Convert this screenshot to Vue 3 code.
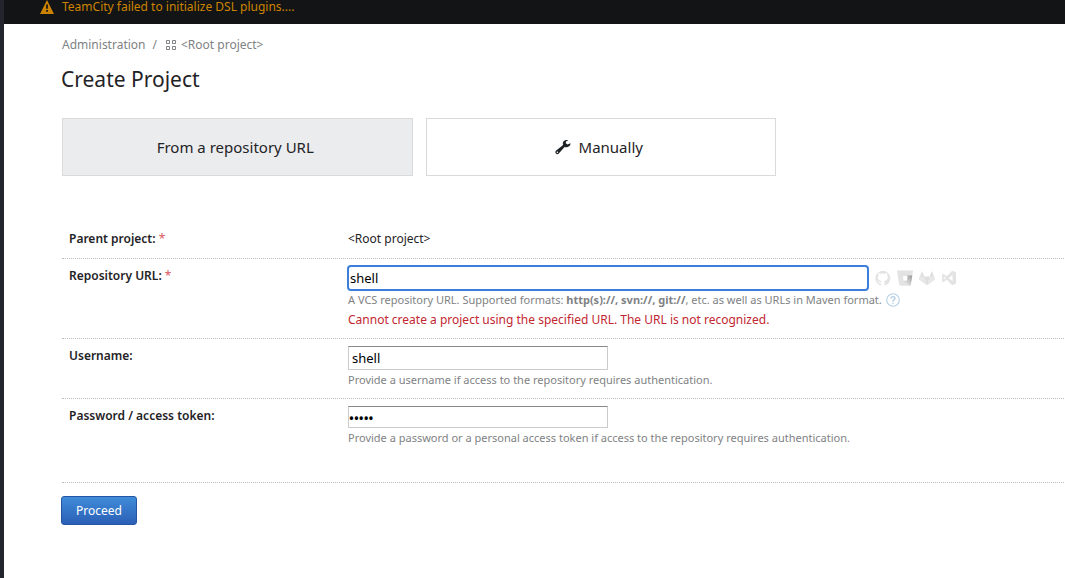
<script setup>
import { ref } from 'vue'

const repositoryUrl = ref('shell')
const username = ref('shell')
const password = ref('shell')
</script>

<template>
  <div class="page">
    <header class="notice">
      <svg class="warn" viewBox="0 0 16 16" aria-hidden="true">
        <path fill="#cc8400" fill-rule="evenodd" d="M8 0 16 16H0ZM7 5v5h2V5ZM7 11.500v2h2v-2Z" />
      </svg>
      <span>TeamCity failed to initialize DSL plugins....</span>
    </header>

    <main class="content">
      <nav class="crumbs">
        <a href="#">Administration</a>
        <span class="slash">/</span>
        <a href="#" class="root">
          <svg class="grid" viewBox="0 0 11 11" fill="none" stroke="currentColor" aria-hidden="true">
            <path d="M.5.5h3v3h-3zM6.5.5h3v3h-3zM.5 6.5h3v3h-3zM6.5 6.5h3v3h-3z" />
          </svg>&lt;Root project&gt;</a>
      </nav>

      <h1>Create Project</h1>

      <div class="modes">
        <button type="button" class="mode active">From a repository URL</button>
        <button type="button" class="mode">
          <svg class="wrench" viewBox="0 0 16 16" aria-hidden="true">
            <path fill="#1f2326" fill-rule="evenodd" d="M15.400 4.200 12.600 5.500 10.800 4.200 11 2.400 13.300 1.200C11.500.6 9.300 1.100 8.400 2.600 7.700 3.700 7.700 4.900 8.100 6L1.200 11.500C.2 12.300.1 13.600.9 14.500c.8.900 2.100.9 2.900 0L9.600 8c1.300.5 3.300.3 4.500-.7 1-.8 1.500-2 1.300-3.100ZM2.400 12.400a.8.8 0 1 1 0 1.600.8.8 0 0 1 0-1.600Z" />
          </svg>
          Manually
        </button>
      </div>

      <form @submit.prevent>
        <div class="row">
          <div class="label">Parent project: <span class="star">*</span></div>
          <div class="field">&lt;Root project&gt;</div>
        </div>

        <div class="row url-row">
          <label class="label" for="url">Repository URL: <span class="star">*</span></label>
          <div class="field">
            <div class="url-line">
              <input id="url" v-model="repositoryUrl" type="text" class="url">
              <svg class="vcs" viewBox="0 0 16 16" aria-hidden="true">
                <path fill="#e3e3e3" d="M8 .8a7.500 7.500 0 0 0-2.500 14.600c.5.1.6-.2.6-.5v-1.500c-2.100.4-2.600-.8-2.800-1.300-.1-.3-.5-.9-.9-1.100-.3-.2-.700-.6 0-.6s1.100.6 1.300.9c.7 1.200 1.900.9 2.400.7.1-.5.3-.9.5-1.100-1.900-.2-3.800-.9-3.800-3.900 0-.8.3-1.500.8-2-.1-.2-.4-1 .1-2 0 0 .7-.2 2.100.8a7 7 0 0 1 4 0c1.400-1 2.100-.8 2.100-.8.5 1 .2 1.800.1 2 .5.5.8 1.200.8 2 0 3-1.900 3.700-3.700 3.900.3.300.5.800.5 1.500v2.500c0 .3.1.6.6.5A7.500 7.500 0 0 0 8 .8Z" />
              </svg>
              <svg class="vcs" viewBox="0 0 16 16" aria-hidden="true">
                <defs>
                  <linearGradient id="bucket" x1="1" y1="0" x2="0" y2="1">
                    <stop offset="0" stop-color="#999" />
                    <stop offset="0.7" stop-color="#e3e3e3" />
                  </linearGradient>
                </defs>
                <path fill="#e3e3e3" d="M0 .5h16l-2.300 15H2.300Z" />
                <path fill="url(#bucket)" d="M10 5.500h5.300l-1.600 10H4L7 11h3Z" />
                <path fill="#fff" d="M6 6h4.500l-.5 4.500H6.500Z" />
              </svg>
              <svg class="vcs" viewBox="0 0 16 16" aria-hidden="true">
                <path fill="#dedede" d="M3 1 5.300 6.500h5.400L13 1l3 8.200L8 15.200 0 9.200Z" />
                <path fill="#e8e8e8" d="M.9 6.500h4.400L8 15.200 0 9.200ZM15.100 6.500h-4.400L8 15.200l8-6Z" />
              </svg>
              <svg class="vcs" viewBox="0 0 16 16" aria-hidden="true">
                <path fill="#e3e3e3" fill-rule="evenodd" d="M11.200.8 15 2.300v11.400l-3.800 1.500-5.500-5.400L2.700 12 1 11.200V4.800L2.700 4l3 2.300ZM11.500 5 7.700 8l3.800 3ZM2.700 6.200v3.600L4.500 8Z" />
              </svg>
            </div>
            <div class="hint">
              <span>A VCS repository URL. Supported formats: <b>http(s)://, svn://, git://</b>, etc. as well as URLs in Maven format.</span>
              <a href="#" class="help" aria-label="Help">
                <svg viewBox="0 0 14 14" fill="none" stroke="#b4cfe5" aria-hidden="true">
                  <circle cx="7" cy="7" r="6.300" stroke-width="1.100" />
                  <path stroke-width="1.400" d="M5 5.500c0-2.400 4-2.400 4-.2C9 6.800 7 6.500 7 8.500M7 9.500v1.300" />
                </svg>
              </a>
            </div>
            <div class="error">Cannot create a project using the specified URL. The URL is not recognized.</div>
          </div>
        </div>

        <div class="row input-row">
          <label class="label" for="username">Username:</label>
          <div class="field">
            <input id="username" v-model="username" type="text" class="text">
            <div class="hint">Provide a username if access to the repository requires authentication.</div>
          </div>
        </div>

        <div class="row input-row last">
          <label class="label" for="password">Password / access token:</label>
          <div class="field">
            <input id="password" v-model="password" type="password" class="text secret">
            <div class="hint">Provide a password or a personal access token if access to the repository requires authentication.</div>
          </div>
        </div>

        <button type="submit" class="proceed">Proceed</button>
      </form>
    </main>
  </div>
</template>

<style>
body {
  background: #fff;
}
</style>

<style scoped>
.page {
  min-height: 100vh;
  box-sizing: border-box;
  border-left: 4px solid #23242e;
  font: 12px/20px "Noto Sans", sans-serif;
  color: #1f2326;
}
.page * {
  box-sizing: border-box;
}
a {
  color: inherit;
  text-decoration: none;
}
button,
input {
  font: inherit;
  color: inherit;
}
.notice {
  display: flex;
  align-items: flex-start;
  gap: 7px;
  height: 24px;
  padding-left: 35px;
  background: #131416;
  color: #cc8400;
  line-height: 14px;
}
.warn {
  width: 16px;
  height: 14px;
}
.content {
  padding: 11px 1px 0 57px;
}
.crumbs {
  display: flex;
  padding-left: 1px;
  color: #808284;
  font-size: 12px;
}
.slash {
  margin: 0 9px 0 7px;
}
.root {
  display: flex;
  align-items: center;
  gap: 4px;
}
.grid {
  width: 11px;
  height: 11px;
}
h1 {
  margin: 10px 0 24px;
  font-size: 21px;
  line-height: 29px;
  font-weight: 400;
}
.modes {
  display: grid;
  grid-template-columns: 1fr 1fr;
  gap: 13px;
  max-width: 714px;
  margin-left: 1px;
}
.mode {
  display: flex;
  align-items: center;
  justify-content: center;
  gap: 8px;
  height: 58px;
  padding: 0 8px 0 4px;
  border: 1px solid #d9dadb;
  background: #fff;
  font-size: 15px;
}
.mode.active {
  background: #ebecee;
}
.wrench {
  width: 16px;
  height: 16px;
}
form {
  margin-top: 45px;
}
.row {
  display: grid;
  grid-template-columns: 279px 1fr;
  margin-left: 1px;
  padding: 8px 0 9px 7px;
  border-bottom: 1px dotted #bbb;
}
.label {
  font-weight: 600;
}
.star {
  font-weight: 400;
  color: #db5860;
}
.url-row {
  padding: 6px 0 7px 7px;
}
.url-row .label {
  padding-top: 1px;
}
.url-line {
  display: flex;
  align-items: center;
  gap: 6px;
}
.url {
  flex: 0 1 522px;
  min-width: 0;
  height: 26px;
  margin-left: -1px;
  padding: 0 1px;
  border: 2px solid #3b7fdb;
  border-radius: 4px;
  outline: none;
  background: #fff;
  color: #000;
  font-size: 13px;
}
.vcs {
  flex: none;
  width: 16px;
  height: 16px;
}
.hint {
  display: flex;
  align-items: center;
  gap: 4px;
  font-size: 11px;
  line-height: 18px;
  color: #808284;
}
.help {
  display: flex;
}
.help svg {
  width: 14px;
  height: 14px;
}
.error {
  line-height: 22px;
  color: #c22731;
}
.input-row {
  padding: 7px 0 8px 7px;
}
.input-row .hint {
  line-height: 20px;
}
.text {
  display: block;
  width: 260px;
  max-width: 100%;
  height: 24px;
  padding: 0 3px;
  border: 1px solid #ccc;
  border-top-color: #888;
  background: #fff;
  color: #000;
  font-size: 13px;
}
.secret {
  height: 22px;
  padding: 2px 0 0;
  font-weight: 600;
}
.last {
  padding-bottom: 34px;
}
.proceed {
  display: block;
  height: 29px;
  margin-top: 13px;
  padding: 0 14px;
  border: 1px solid #2454a4;
  border-radius: 3px;
  background: linear-gradient(#3f8cd9, #2b5fb6);
  color: #fff;
}
</style>
